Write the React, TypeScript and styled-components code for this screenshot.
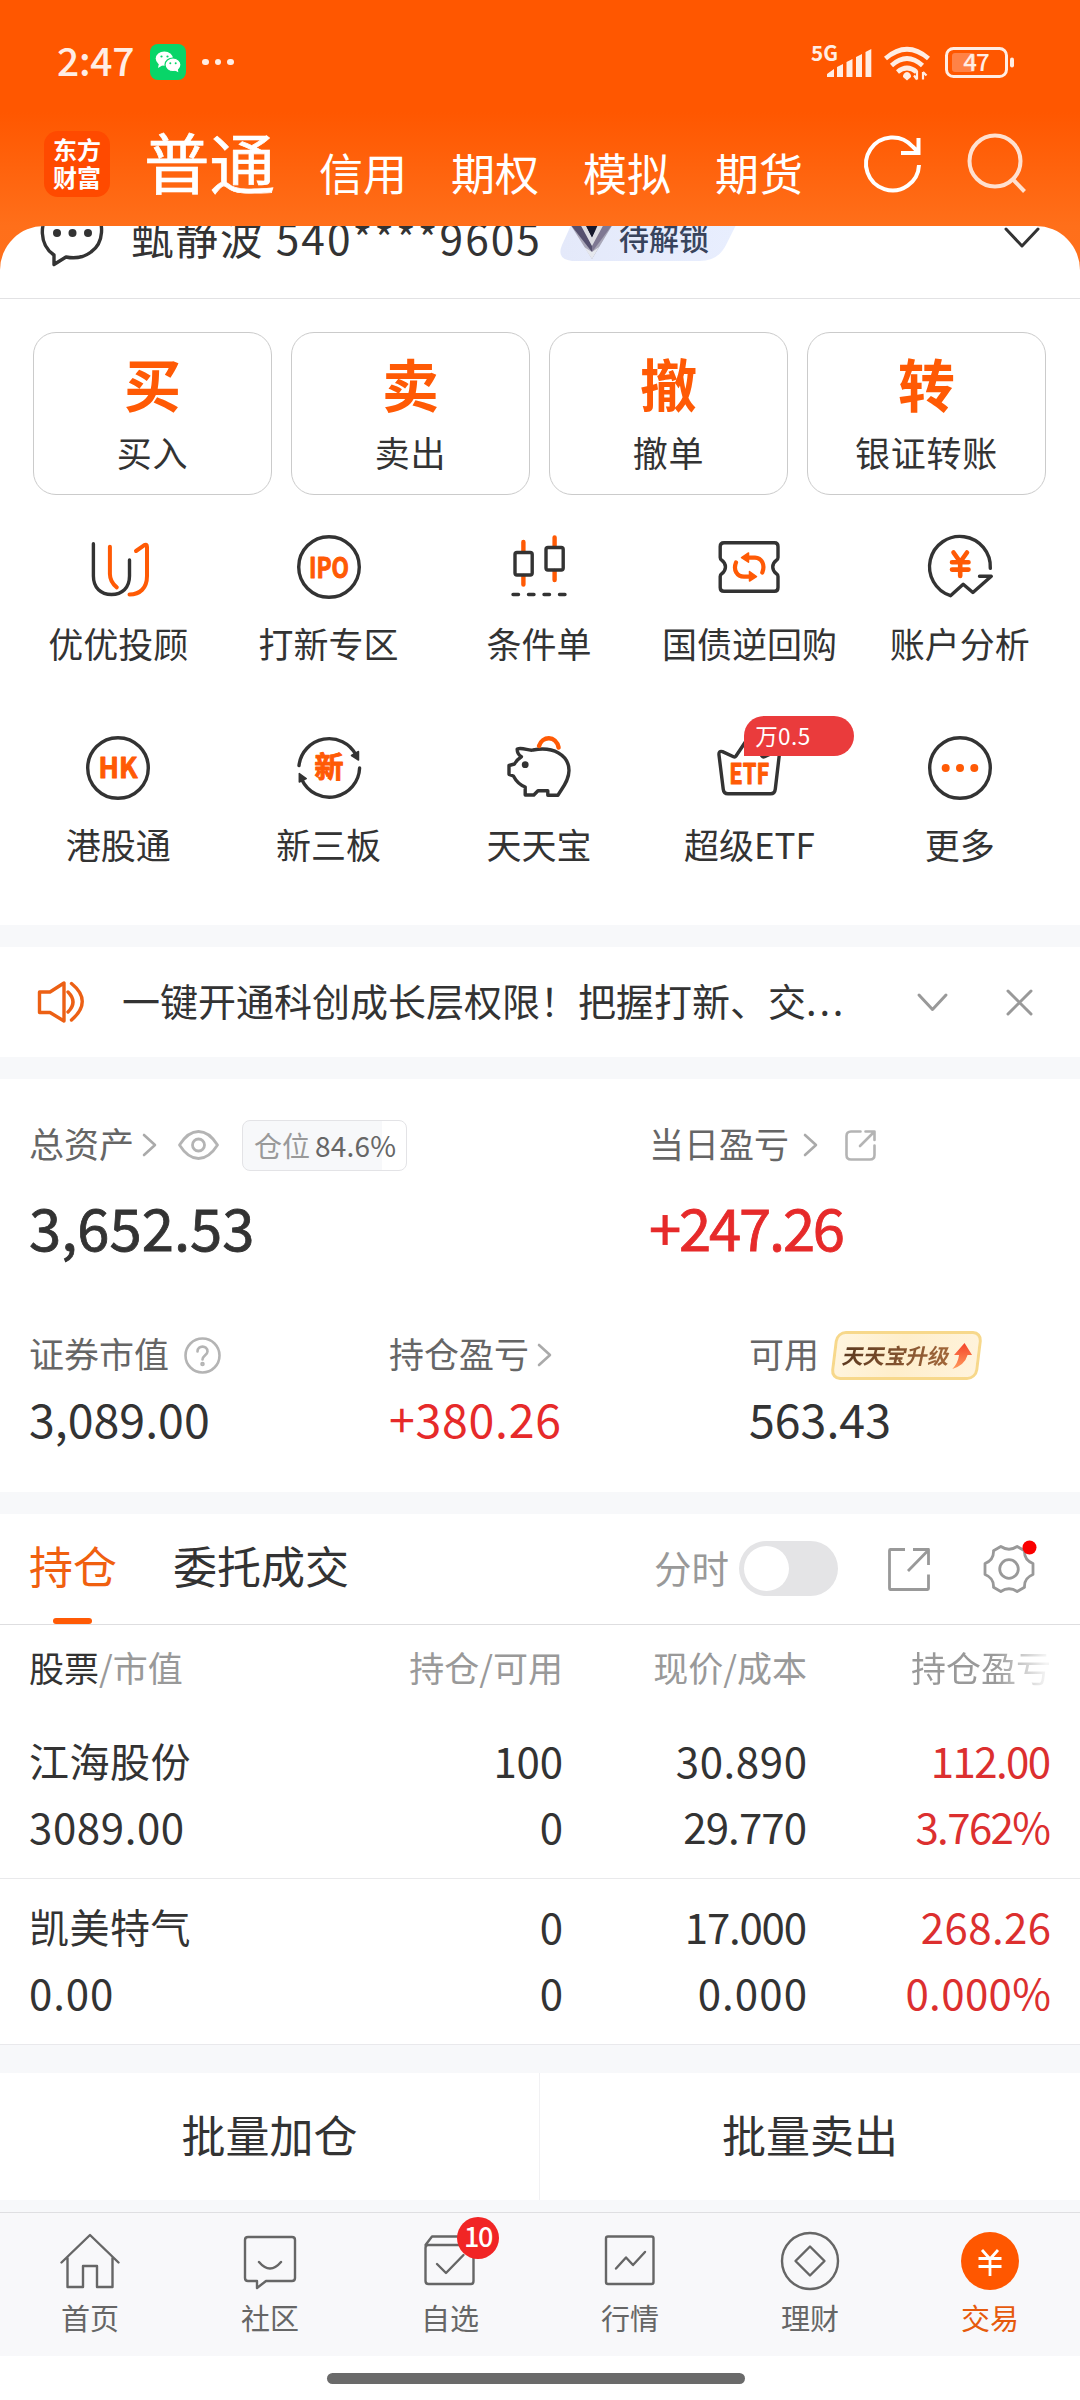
import React from "react";
import styled, { createGlobalStyle, css } from "styled-components";

const ORANGE = "#ff5a05";
const INK = "#333333";
const MUTED = "#666666";
const FAINT = "#999999";
const RED = "#e62a2a";

const GlobalStyle = createGlobalStyle`
  * { box-sizing: border-box; }
  body {
    margin: 0;
    background: #ffffff;
    font-family: "Noto Sans CJK SC", "Noto Sans", sans-serif;
    color: ${INK};
  }
  svg { display: block; flex: none; overflow: visible; }
`;

const Screen = styled.div`
  width: 1080px;
  height: 2400px;
  display: flex;
  flex-direction: column;
  overflow: hidden;
  white-space: nowrap;
`;

/* ---------- header ---------- */

const Hero = styled.header`
  height: 298px;
  flex: none;
  display: flex;
  flex-direction: column;
  background: linear-gradient(180deg, #ff5700 0, #ff5700 112px, #ff6f1a 226px, #ff711d 298px);
`;

const StatusBar = styled.div`
  height: 122px;
  padding: 2px 65px 0 57px;
  display: flex;
  align-items: center;
  justify-content: space-between;
`;

const StatusLeft = styled.div`
  display: flex;
  align-items: center;
`;

const Clock = styled.span`
  width: 93px;
  font-size: 39px;
  font-weight: 500;
  line-height: 44px;
  height: 50px;
  letter-spacing: -0.3px;
  color: #ffede4;
`;

const StatusDots = styled.div`
  display: flex;
  gap: 6px;
  margin-left: 16px;
  i {
    width: 6.5px;
    height: 6.5px;
    border-radius: 50%;
    background: #ffede4;
  }
`;

const TopNav = styled.nav`
  height: 104px;
  padding-left: 44px;
  display: flex;
  align-items: center;
`;

const Logo = styled.div`
  width: 66px;
  height: 66px;
  margin-top: -20px;
  border-radius: 14px;
  background: #ff4a00;
  color: #fff;
  font-size: 24px;
  font-weight: 700;
  line-height: 28px;
  display: flex;
  flex-direction: column;
  align-items: center;
  justify-content: center;
  padding-bottom: 3px;
`;

const Tabs = styled.div`
  display: flex;
  align-items: flex-end;
  margin-left: 34px;
  gap: 44px;
  height: 104px;
`;

const TopTab = styled.span<{ $active?: boolean }>`
  color: #fff;
  ${(p) =>
    p.$active
      ? css`
          font-size: 65.5px;
          line-height: 66px;
          padding-bottom: 32px;
          -webkit-text-stroke: 0.7px #fff;
        `
      : css`
          font-size: 44px;
          line-height: 44px;
          padding-bottom: 32px;
        `}
`;

const TopActions = styled.div`
  display: flex;
  gap: 43px;
  margin: -23px 0 0 61px;
`;

const Sheet = styled.div`
  height: 72px;
  border-radius: 44px 44px 0 0;
  background: #fff;
  overflow: hidden;
`;

const AccountRow = styled.div`
  height: 76px;
  margin-top: -27px;
  padding: 0 41px 0 41px;
  display: flex;
  align-items: center;
`;

const AccountName = styled.span`
  margin-left: 27px;
  width: 429px;
  font-size: 42.5px;
  letter-spacing: 1.95px;
  line-height: 60px;
`;

const VipBadge = styled.div`
  width: 178px;
  height: 48px;
  display: flex;
  align-items: center;
  padding-left: 9px;
  gap: 5px;
  font-size: 30px;
  font-weight: 500;
  line-height: 40px;
  color: #38435c;
  background: linear-gradient(90deg, #e4e9fa, #e8eefe);
  clip-path: path("M26 0H168Q182 0 176 12L166 32Q158 48 140 48H12Q-4 46 2 32L12 10Q16 0 26 0Z");
`;

const Push = styled.div`
  flex: 1;
`;

/* ---------- trading shortcuts ---------- */

const Trade = styled.section`
  height: 627px;
  flex: none;
  border-top: 1px solid #e2e2e4;
  display: flex;
  flex-direction: column;
`;

const TradeCards = styled.div`
  display: grid;
  grid-template-columns: repeat(4, 1fr);
  gap: 19px;
  padding: 33px 34px 0 33px;
`;

const TradeCard = styled.div`
  height: 163px;
  border: 1px solid #cbcbcb;
  border-radius: 23px;
  display: flex;
  flex-direction: column;
  align-items: center;
  padding-top: 20px;
`;

const CardGlyph = styled.span`
  font-size: 57px;
  line-height: 58px;
  font-weight: 700;
  color: ${ORANGE};
`;

const CardLabel = styled.span`
  margin-top: 23px;
  font-size: 35px;
  line-height: 36px;
  letter-spacing: 0.8px;
`;

const ShortcutGrid = styled.div`
  display: grid;
  grid-template-columns: repeat(5, 1fr);
  grid-auto-rows: 201px;
  padding: 36px 15px 0 13px;
`;

const Shortcut = styled.div`
  position: relative;
  display: flex;
  flex-direction: column;
  align-items: center;
`;

const ShortcutLabel = styled.span`
  margin-top: 22px;
  font-size: 35px;
  line-height: 36px;
`;

const PromoTag = styled.span`
  position: absolute;
  left: 100px;
  top: -16px;
  width: 110px;
  height: 40px;
  padding-left: 11px;
  border-radius: 20px 20px 20px 0;
  background: #ea3b3c;
  color: #fff;
  font-size: 22.5px;
  line-height: 38px;
  letter-spacing: 0.4px;
`;

/* ---------- notice ---------- */

const Gap = styled.div<{ $h: number; $line?: boolean }>`
  height: ${(p) => p.$h}px;
  flex: none;
  background: #f7f8fa;
  ${(p) => p.$line && "border-top: 1px solid #e9e9ec;"}
`;

const Notice = styled.section`
  height: 110px;
  flex: none;
  padding: 0 48px 0 37px;
  display: flex;
  align-items: center;
`;

const NoticeText = styled.span`
  margin: -4px 0 0 37px;
  width: 796px;
  font-size: 38px;
  line-height: 44px;
`;

const Ellipsis = styled.span`
  letter-spacing: 2.8px;
`;

/* ---------- assets ---------- */

const Assets = styled.section`
  height: 413px;
  flex: none;
  padding: 39px 0 0 29px;
`;

const AssetMain = styled.div`
  display: grid;
  grid-template-columns: 620px 1fr;
  height: 210px;
`;

const AssetSub = styled.div`
  display: grid;
  grid-template-columns: 360px 360px 1fr;
`;

const LabelLine = styled.div`
  height: 54px;
  display: flex;
  align-items: center;
  font-size: 35px;
  line-height: 54px;
  color: ${MUTED};
  span {
    margin-top: -4px;
  }
`;

const Amount = styled.div<{ $big?: boolean; $up?: boolean; $track?: number }>`
  font-size: ${(p) => (p.$big ? 58 : 46.5)}px;
  line-height: 60px;
  margin-top: ${(p) => (p.$big ? 24 : 6)}px;
  letter-spacing: ${(p) => p.$track ?? 0}px;
  color: ${(p) => (p.$up ? RED : INK)};
  ${(p) => p.$big && "-webkit-text-stroke: 0.8px currentColor;"}
`;

const PositionTag = styled.div`
  width: 165px;
  height: 51px;
  margin-left: 23px;
  border: 1px solid #e3e3e6;
  border-radius: 8px;
  background: linear-gradient(90deg, #f7f8fa 85.5%, #fff 85.5%);
  display: flex;
  align-items: center;
  padding-left: 11px;
  gap: 5px;
  font-size: 28px;
  color: ${FAINT};
  b {
    font-weight: 400;
    color: ${MUTED};
    margin-top: -1px;
    letter-spacing: 0.2px;
  }
`;

const UpgradeTag = styled.div`
  width: 147px;
  height: 49px;
  margin-left: 14px;
  border: 3px solid #f7d88b;
  border-radius: 10px;
  background: linear-gradient(100deg, #fff5df, #feeecb 45%, #fff3dc);
  transform: skewX(-7deg);
  display: flex;
  align-items: center;
  padding-left: 7px;
  gap: 3px;
`;

const UpgradeText = styled.b`
  font-size: 21.4px;
  line-height: 40px;
  font-weight: 700;
  margin-top: -2px;
  transform: skewX(-5deg);
  color: transparent;
  background: linear-gradient(90deg, #5d3a20, #a2673a);
  background-clip: text;
`;

/* ---------- holdings ---------- */

const HoldTabs = styled.div`
  height: 111px;
  flex: none;
  border-bottom: 1px solid #dedee0;
  padding: 0 45px 0 29px;
  display: flex;
  align-items: stretch;
`;

const HoldTab = styled.div<{ $active?: boolean }>`
  font-size: 44px;
  line-height: 102px;
  margin-right: 56px;
  color: ${(p) => (p.$active ? "#f0600f" : INK)};
  display: flex;
  flex-direction: column;
  align-items: center;
  &::after {
    content: "";
    width: 39px;
    height: 6px;
    margin: 2px 2px 0 0;
    border-radius: 3px;
    background: ${(p) => (p.$active ? ORANGE : "transparent")};
  }
`;

const HoldTools = styled.div`
  display: flex;
  align-items: center;
  height: 109px;
`;

const ToolText = styled.span`
  font-size: 37.5px;
  line-height: 44px;
  margin: -4px 10px 0 0;
  color: ${FAINT};
`;

const Switch = styled.div`
  width: 99px;
  height: 55px;
  padding: 5px;
  border-radius: 28px;
  background: #e4e4e6;
  margin-right: 47px;
  &::before {
    content: "";
    display: block;
    width: 45px;
    height: 45px;
    border-radius: 50%;
    background: #fff;
  }
`;

const GridRow = styled.div`
  display: grid;
  grid-template-columns: 334px 200px 244px 244px;
  padding-left: 29px;
  flex: none;
`;

const HeadRow = styled(GridRow)`
  height: 88px;
  font-size: 35px;
  line-height: 83px;
  color: ${FAINT};
  b {
    font-weight: 400;
    color: ${INK};
  }
`;

const HoldRow = styled(GridRow)<{ $line?: boolean }>`
  height: ${(p) => (p.$line ? 166 : 165)}px;
  padding-top: 14px;
  ${(p) => p.$line && "border-bottom: 1px solid #e9e9eb;"}
`;

const Cell = styled.div<{ $right?: boolean }>`
  text-align: ${(p) => (p.$right ? "right" : "left")};
`;

const FadingCell = styled(Cell)`
  color: transparent;
  background: linear-gradient(90deg, ${FAINT} 77%, #f4f4f4 98%);
  background-clip: text;
`;

const StockName = styled.div`
  font-size: 40px;
  letter-spacing: 0.5px;
  line-height: 66px;
  height: 66px;
`;

const Num = styled.div<{ $up?: boolean; $track?: number }>`
  font-size: 42px;
  letter-spacing: ${(p) => p.$track ?? 0.4}px;
  margin-right: ${(p) => -(p.$track ?? 0.4)}px;
  line-height: 66px;
  height: 66px;
  color: ${(p) => (p.$up ? "#dc2f2f" : INK)};
`;

const Batch = styled.div`
  height: 127px;
  flex: none;
  display: grid;
  grid-template-columns: 539px 1fr;
  div {
    text-align: center;
    font-size: 44px;
    line-height: 122px;
  }
  div + div {
    border-left: 1px solid #f1f1f3;
  }
`;

/* ---------- bottom bar ---------- */

const BottomNav = styled.nav`
  height: 144px;
  flex: none;
  background: #f8f8fa;
  border-top: 1px solid #dfdfe2;
  display: grid;
  grid-template-columns: repeat(6, 1fr);
`;

const NavItem = styled.div<{ $active?: boolean }>`
  position: relative;
  display: flex;
  flex-direction: column;
  align-items: center;
  padding-top: 18px;
  font-size: 29px;
  line-height: 34px;
  color: ${(p) => (p.$active ? "#e65a0c" : MUTED)};
  span {
    margin-top: 9px;
  }
`;

const CountBadge = styled.b`
  position: absolute;
  left: 97px;
  top: 4px;
  width: 42px;
  height: 42px;
  border-radius: 50%;
  background: #f12525;
  color: #fff;
  font-size: 27px;
  font-weight: 500;
  line-height: 38px;
  letter-spacing: -1.5px;
  text-align: center;
`;

const HomeArea = styled.div`
  height: 44px;
  flex: none;
  padding: 17px 0 0 327px;
  &::before {
    content: "";
    display: block;
    width: 418px;
    height: 11px;
    border-radius: 6px;
    background: #6a6a6a;
  }
`;

/* ---------- icons ---------- */

const Stroked = styled.svg<{ $c?: string; $w?: number }>`
  fill: none;
  stroke: ${(p) => p.$c ?? INK};
  stroke-width: ${(p) => p.$w ?? 3.4};
  stroke-linecap: round;
  stroke-linejoin: round;
  text {
    stroke: ${ORANGE};
    stroke-width: 1;
    fill: ${ORANGE};
    font-weight: 700;
    text-anchor: middle;
  }
`;

const Q = ({ children }: { children: React.ReactNode }) => (
  <Stroked width="72" height="72" viewBox="0 0 72 72">{children}</Stroked>
);

const Advisor = () => (
  <Q>
    <path d="M11.4 12.7V45C11.4 57 19 63.5 29.5 63.5S47.5 57 47.5 45V29" />
    <path d="M27.9 15.7V43Q28 51 34.8 56.3M54 20L62 14.3Q65 12.5 65 16V45C65 57 58 63.5 47.5 63.5" stroke={ORANGE} strokeWidth="4" />
  </Q>
);
const Ipo = () => (
  <Q>
    <circle cx="36" cy="36" r="30.3" />
    <text x="36" y="46.5" fontSize="28" textLength="40" lengthAdjust="spacingAndGlyphs">IPO</text>
  </Q>
);
const Candles = () => (
  <Q>
    <path d="M20.4 11V20M20.4 45V53.5M51.6 6.5V15M51.6 40V49" stroke={ORANGE} strokeWidth="4.4" />
    <rect x="12" y="21.5" width="17.2" height="22.5" rx="2" />
    <rect x="43" y="16.5" width="17.2" height="22.5" rx="2" />
    <path d="M10 63.5H15.5M25.5 63.5H31M41 63.5H46.5M56.5 63.5H62" />
  </Q>
);
const Repo = () => (
  <Q>
    <path d="M11 11.7H61.5Q65 11.7 65 15.5V26.5Q65 28.3 63.5 29.2C58.5 33 58.5 39 63.5 42.8Q65 43.7 65 45.5V56.5Q65 60.3 61.5 60.3H11Q7.2 60.3 7.2 56.5V45.5Q7.2 43.7 8.7 42.8C13.7 39 13.7 33 8.7 29.2Q7.2 28.3 7.2 26.5V15.5Q7.2 11.7 11 11.7Z" />
    <path d="M33 26.6H42C49 27 52.3 34 49.3 41.5M23 31.5C20 39 24 45.5 31 45.6H38" stroke={ORANGE} strokeWidth="4.2" />
    <path d="M28.5 26.6L35.5 22V31.2ZM43.5 45.5L36.5 40.5V50Z" fill={ORANGE} stroke={ORANGE} strokeWidth="1.5" />
  </Q>
);
const Analysis = () => (
  <Q>
    <path d="M66.3 37.3A30.4 30.4 0 1 0 26.5 64.7L39.2 53.3L48.9 61.5L67.3 45.3H55.5" />
    <path d="M29.5 21.5L36.2 31L43 21.5M28 31.2H44.5M28 38.6H44.5M36.2 31V45" stroke={ORANGE} strokeWidth="4.6" />
  </Q>
);
const HongKong = () => (
  <Q>
    <circle cx="36" cy="36" r="30.3" />
    <text x="36" y="46.4" fontSize="28" textLength="39" lengthAdjust="spacingAndGlyphs">HK</text>
  </Q>
);
const NewBoard = () => (
  <Q>
    <path d="M6 33.5A30.3 30.3 0 0 1 63 23M66.6 36A30.3 30.3 0 0 1 9 48" />
    <path d="M65.5 19.5V28L58.5 23.5ZM6.3 50V41.5L13.2 46.5Z" fill={INK} strokeWidth="1.5" />
    <text x="36" y="46" fontSize="29">新</text>
  </Q>
);
const Piggy = () => (
  <Q>
    <path d="M14.2 17C20 15 26 19.4 30 18C50 14 66 23 66 38.5C66 49 59 56 55 63.2H44.8V58.7H35L30.8 63H22.2V55C17 53 13 49 10.4 44L6 42.3V33.5L11.5 32Q14 27.5 18.4 24.7Q14 22 14.2 17Z" />
    <circle cx="22.2" cy="32.7" r="3.4" fill={INK} stroke="none" />
    <path d="M36 14C39 4 53 3 55.6 15.5" stroke={ORANGE} strokeWidth="4.4" />
  </Q>
);
const Etf = () => (
  <Q>
    <path d="M9.5 19.6L20.5 24.8Q22 25.5 23 24L34 7.5Q36 5 38 7.5L49 24Q50 25.5 51.5 24.8L62.5 19.6Q66.7 18.5 66.3 23L62.3 57Q61.8 61.8 57.5 61.8H15Q10.7 61.8 10.2 57L6 23Q5.5 18.500 9.5 19.6Z" />
    <text x="36.3" y="52" fontSize="28" textLength="40" lengthAdjust="spacingAndGlyphs">ETF</text>
  </Q>
);
const More = () => (
  <Q>
    <circle cx="36" cy="36" r="30.3" />
    <g fill={ORANGE} stroke="none">
      <circle cx="21.7" cy="36" r="4" />
      <circle cx="36" cy="36" r="4" />
      <circle cx="50.3" cy="36" r="4" />
    </g>
  </Q>
);

const WeChat = () => (
  <svg width="36" height="36" viewBox="0 0 36 36">
    <rect width="36" height="36" rx="8" fill="#08d568" />
    <ellipse cx="14.3" cy="14.6" rx="8.6" ry="7.2" fill="#fff" />
    <path d="M9 19L8 24L13 21Z" fill="#fff" />
    <ellipse cx="23" cy="20.8" rx="8" ry="6.8" fill="#fff" stroke="#08d568" strokeWidth="1.2" />
    <path d="M24 26L28.3 28.3L27.8 24.5Z" fill="#fff" />
    <g fill="#08d568">
      <circle cx="11.5" cy="12.5" r="1.1" />
      <circle cx="17.5" cy="12.5" r="1.1" />
      <circle cx="20.3" cy="19.2" r="1" />
      <circle cx="25.7" cy="19.2" r="1" />
    </g>
  </svg>
);

const Signals = () => (
  <svg width="204" height="40" viewBox="0 0 204 40" fill="#ffede4">
    <text x="0" y="18.5" fontSize="21" fontWeight="700" textLength="27" lengthAdjust="spacingAndGlyphs">5G</text>
    <path d="M16 35V32L23 27V35ZM26 35V25L32 22V35ZM35.500 35V20L41.500 17V35ZM45 35V15L51 12V35ZM54.500 35V10L60.300 7V35Z" />
    <g fill="none" stroke="#ffede4" strokeWidth="4.600">
      <path d="M74.500 16.500Q96 -2 117.500 16.500" />
      <path d="M80.500 23.500Q96 9.500 111.500 23.500" />
      <path d="M86.500 30Q96 22 105.500 30" />
    </g>
    <path d="M96 30A4.500 4.500 0 0 1 100 35L96 38.500L92 35A4.500 4.500 0 0 1 96 30Z" />
    <path d="M106 29V37.500M106 37.500L103 33.500M112 37.500V30M112 30L115.500 33.500" stroke="#ffede4" strokeWidth="2.200" />
    <rect x="135.500" y="6.500" width="60" height="28" rx="7" fill="none" stroke="#ffede4" strokeWidth="3" />
    <rect x="141" y="11" width="23" height="19" rx="3" fill="#ff8246" />
    <text x="165" y="29" fontSize="24" fontWeight="500" textAnchor="middle" letterSpacing="-1">47</text>
    <rect x="199" y="15.500" width="4" height="10" rx="2" />
  </svg>
);

const ChevronDown = ({ w, c, s = 3 }: { w: number; c: string; s?: number }) => (
  <Stroked width={w} height={w / 2} viewBox={`0 0 ${w} ${w / 2}`} $c={c} $w={s}>
    <path d={`M1 0L${w / 2} ${w / 2}L${w - 1} 0`} />
  </Stroked>
);

const ChevronRight = styled(({ className }: { className?: string; $gap: number }) => (
  <Stroked className={className} width="13" height="22" viewBox="0 0 13 22" $c="#aaaaaa" $w={2.6}>
    <path d="M1 1L12 11L1 21" />
  </Stroked>
))`
  margin-left: ${(p) => p.$gap}px;
`;

const LineIcon = styled(Stroked)<{ $gap: number }>`
  margin-left: ${(p) => p.$gap}px;
`;

const UpArrow = () => (
  <svg width="19" height="26" viewBox="0 0 19 26">
    <defs>
      <linearGradient id="up" x1="0" y1="0" x2="0" y2="1">
        <stop offset="0" stopColor="#f4432a" />
        <stop offset="1" stopColor="#ff9a5c" />
      </linearGradient>
    </defs>
    <path d="M10 0L19 12H14.500Q13 22 1 26Q6 20 6 12H1Z" fill="url(#up)" />
  </svg>
);

/* ---------- data ---------- */

const cards = [["买", "买入"], ["卖", "卖出"], ["撤", "撤单"], ["转", "银证转账"]];

const shortcuts: { icon: React.ReactNode; label: string; tag?: string }[] = [
  { icon: <Advisor />, label: "优优投顾" },
  { icon: <Ipo />, label: "打新专区" },
  { icon: <Candles />, label: "条件单" },
  { icon: <Repo />, label: "国债逆回购" },
  { icon: <Analysis />, label: "账户分析" },
  { icon: <HongKong />, label: "港股通" },
  { icon: <NewBoard />, label: "新三板" },
  { icon: <Piggy />, label: "天天宝" },
  { icon: <Etf />, label: "超级ETF", tag: "万0.5" },
  { icon: <More />, label: "更多" },
];

type Figure = { text: string; track?: number };

const holdings: { name: string; value: Figure; qty: Figure[]; price: Figure[]; pnl: Figure[] }[] = [
  {
    name: "江海股份",
    value: { text: "3089.00", track: 0.6 },
    qty: [{ text: "100", track: -0.2 }, { text: "0" }],
    price: [{ text: "30.890", track: 0.6 }, { text: "29.770", track: -0.9 }],
    pnl: [{ text: "112.00", track: -1.6 }, { text: "3.762%", track: -1.6 }],
  },
  {
    name: "凯美特气",
    value: { text: "0.00", track: 0.9 },
    qty: [{ text: "0" }, { text: "0" }],
    price: [{ text: "17.000", track: -1.2 }, { text: "0.000", track: 1.1 }],
    pnl: [{ text: "268.26" }, { text: "0.000%" }],
  },
];

const N = ({ children }: { children: React.ReactNode }) => (
  <Stroked width="60" height="60" viewBox="0 0 60 60" $c="#666666" $w={2.4}>{children}</Stroked>
);

const navs: { label: string; icon: React.ReactNode; count?: number; active?: boolean }[] = [
  { label: "首页", icon: <N><path d="M1.500 31.500L30 4L58.500 31.500M7.500 27V56H23V35H37V56H52.500V27" /></N> },
  { label: "社区", icon: <N><path d="M8 6H52Q55 6 55 9V47Q55 50 52 50H26L17 57V50H8Q5 50 5 47V9Q5 6 8 6ZM19 31Q30 44 41 31" /></N> },
  { label: "自选", icon: <N><path d="M5.500 14L12 5.500H47L53.500 14M8 14H51Q53.500 14 53.500 17V50Q53.500 53 51 53H8.500Q5.500 53 5.500 50V17Q5.500 14 8 14ZM17 33L26 42L43.500 24" /></N>, count: 10 },
  { label: "行情", icon: <N><rect x="6" y="5.500" width="47.500" height="47.500" rx="2" /><path d="M16 37.500L26 26.500L33 34L45 21" /></N> },
  { label: "理财", icon: <N><circle cx="30" cy="30" r="28" /><path d="M30 15.500L44.500 30L30 44.500L15.500 30Z" /></N> },
  {
    label: "交易",
    active: true,
    icon: (
      <N>
        <circle cx="30" cy="30" r="29" fill="#ff5700" stroke="none" />
        <path d="M22 19L30 28L38 19M18.500 27.500H41.500M18.500 35.500H41.500M30 28V45" stroke="#fff" strokeLinecap="butt" strokeWidth="2.800" />
      </N>
    ),
  },
];

const Figures = ({ items, up }: { items: Figure[]; up?: boolean }) => (
  <Cell $right>
    {items.map((f, i) => (
      <Num key={i} $up={up} $track={f.track}>{f.text}</Num>
    ))}
  </Cell>
);

export default function App() {
  return (
    <Screen>
      <GlobalStyle />
      <Hero>
        <StatusBar>
          <StatusLeft>
            <Clock>2:47</Clock>
            <WeChat />
            <StatusDots><i /><i /><i /></StatusDots>
          </StatusLeft>
          <Signals />
        </StatusBar>
        <TopNav>
          <Logo><span>东方</span><span>财富</span></Logo>
          <Tabs>
            <TopTab $active>普通</TopTab>
            <TopTab>信用</TopTab>
            <TopTab>期权</TopTab>
            <TopTab>模拟</TopTab>
            <TopTab>期货</TopTab>
          </Tabs>
          <TopActions>
            <Stroked width="60" height="60" viewBox="0 0 60 60" $c="#fff" $w={4}>
              <path d="M55 32A26.500 26.500 0 1 1 48.500 13.500L54 19M54.500 5V20H37" strokeLinecap="butt" strokeLinejoin="miter" />
            </Stroked>
            <Stroked width="60" height="60" viewBox="0 0 60 60" $c="#ffe0cf" $w={4}>
              <circle cx="28" cy="28" r="25.500" />
              <path d="M45.500 46L57.500 58.500" strokeLinecap="butt" />
            </Stroked>
          </TopActions>
        </TopNav>
        <Sheet>
          <AccountRow>
            <Stroked width="63" height="70" viewBox="0 0 63 70" $w={3.4}>
              <path d="M13 53C-2 43 -2 20 10 10C23 -1 42 -1 53 10C64 20 63 41 50 50Q39 58 25 55L13 62.500Z" />
              <g fill={INK} stroke="none">
                <circle cx="16" cy="31" r="4" />
                <circle cx="31.500" cy="31" r="4" />
                <circle cx="47" cy="31" r="4" />
              </g>
            </Stroked>
            <AccountName>甄静波 540****9605</AccountName>
            <VipBadge>
              <svg width="45" height="46" viewBox="0 0 45 46">
                <path d="M1 10L12 4L23 27L34 4L44 10L23 45Z" fill="#a9a7b8" />
                <path d="M1 10L12 6L23 29L23 38Z" fill="#55506e" />
                <path d="M44 10L34 6L23 29L23 38Z" fill="#7f7893" />
                <path d="M12 4H34L23 24Z" fill="#16182c" />
                <path d="M10 8L23 32L36 8L31 6L23 24L14 6Z" fill="#dcdce2" />
                <path d="M15 33L23 38L30 33L23 45Z" fill="#e6e8ee" />
              </svg>
              待解锁
            </VipBadge>
            <Push />
            <ChevronDown w={34} c={INK} />
          </AccountRow>
        </Sheet>
      </Hero>

      <Trade>
        <TradeCards>
          {cards.map(([glyph, label]) => (
            <TradeCard key={label}>
              <CardGlyph>{glyph}</CardGlyph>
              <CardLabel>{label}</CardLabel>
            </TradeCard>
          ))}
        </TradeCards>
        <ShortcutGrid>
          {shortcuts.map((s) => (
            <Shortcut key={s.label}>
              {s.icon}
              {s.tag && <PromoTag>{s.tag}</PromoTag>}
              <ShortcutLabel>{s.label}</ShortcutLabel>
            </Shortcut>
          ))}
        </ShortcutGrid>
      </Trade>

      <Gap $h={22} />
      <Notice>
        <Stroked width="48" height="42" viewBox="0 0 48 42" $c="#ec6014" $w={3.4}>
          <path d="M2.500 11H13L27 2V40L13 31.500H2.500Z" />
          <path d="M31 11Q41 21 31 31M34.500 2.500Q56 20 34.500 39" />
        </Stroked>
        <NoticeText>一键开通科创成长层权限！把握打新、交<Ellipsis>...</Ellipsis></NoticeText>
        <ChevronDown w={29} c={FAINT} />
        <Push />
        <Stroked width="25" height="25" viewBox="0 0 25 25" $c={FAINT} $w={3}>
          <path d="M1 1L24 24M24 1L1 24" />
        </Stroked>
      </Notice>
      <Gap $h={22} />

      <Assets>
        <AssetMain>
          <div>
            <LabelLine>
              <span>总资产</span>
              <ChevronRight $gap={9} />
              <LineIcon $gap={22} width="41" height="30" viewBox="0 0 41 30" $c="#b4b4b4" $w={2.8}>
                <path d="M1.500 15Q10 1.500 20.500 1.500T39.500 15Q31 28.500 20.500 28.500T1.500 15Z" />
                <circle cx="20.500" cy="15" r="6" />
              </LineIcon>
              <PositionTag>仓位<b>84.6%</b></PositionTag>
            </LabelLine>
            <Amount $big>3,652.53</Amount>
          </div>
          <div>
            <LabelLine>
              <span>当日盈亏</span>
              <ChevronRight $gap={15} />
              <LineIcon $gap={28} width="31" height="31" viewBox="0 0 31 31" $c="#b4b4b4" $w={2.6}>
                <path d="M15.500 1.500H6Q1.500 1.500 1.500 6V25Q1.500 29.500 6 29.500H25Q29.500 29.500 29.500 25V15.500M15 16L29 2M20.500 1.500H29.500V10" />
              </LineIcon>
            </LabelLine>
            <Amount $big $up $track={-2.2}>+247.26</Amount>
          </div>
        </AssetMain>
        <AssetSub>
          <div>
            <LabelLine>
              <span>证券市值</span>
              <LineIcon $gap={15} width="37" height="37" viewBox="0 0 37 37" $c="#b4b4b4" $w={2.6}>
                <circle cx="18.500" cy="18.500" r="17" />
                <path d="M13.500 14.500C13.500 8 23.500 8 23.500 14.500C23.500 18 18.500 18.500 18.500 22.500" />
                <circle cx="18.500" cy="27" r="1" />
              </LineIcon>
            </LabelLine>
            <Amount>3,089.00</Amount>
          </div>
          <div>
            <LabelLine>
              <span>持仓盈亏</span>
              <ChevronRight $gap={9} />
            </LabelLine>
            <Amount $up $track={0.7}>+380.26</Amount>
          </div>
          <div>
            <LabelLine>
              <span>可用</span>
              <UpgradeTag>
                <UpgradeText>天天宝升级</UpgradeText>
                <UpArrow />
              </UpgradeTag>
            </LabelLine>
            <Amount>563.43</Amount>
          </div>
        </AssetSub>
      </Assets>
      <Gap $h={22} />

      <HoldTabs>
        <HoldTab $active>持仓</HoldTab>
        <HoldTab>委托成交</HoldTab>
        <Push />
        <HoldTools>
          <ToolText>分时</ToolText>
          <Switch />
          <Stroked width="48" height="48" viewBox="0 0 48 48" $c={FAINT} $w={2.8}>
            <path d="M20 4.500H5.500Q4.500 4.500 4.500 5.500V43Q4.500 44.500 5.500 44.500H42.500Q43.500 44.500 43.500 43.500V29.500M23 26L43.500 5M28 4.500H43.500V20" strokeLinecap="butt" />
          </Stroked>
          <LineIcon $gap={50} width="52" height="50" viewBox="0 0 52 50" $c={FAINT} $w={2.8}>
            <path d="M10.500 6.800L17.800 2.500Q26 8 34.200 2.500L41.500 6.800Q41 16 50 19.500V30.500Q41 34 41.500 43.200L34.200 47.500Q26 42 17.800 47.500L10.500 43.200Q11 34 2 30.500V19.500Q11 16 10.500 6.800Z" />
            <circle cx="26" cy="25" r="9.300" />
            <circle cx="46.500" cy="3.500" r="7" fill="#fa0000" stroke="none" />
          </LineIcon>
        </HoldTools>
      </HoldTabs>
      <HeadRow>
        <Cell><b>股票</b>/市值</Cell>
        <Cell $right>持仓/可用</Cell>
        <Cell $right>现价/成本</Cell>
        <FadingCell $right>持仓盈亏</FadingCell>
      </HeadRow>
      {holdings.map((h, i) => (
        <HoldRow key={h.name} $line={i === 0}>
          <Cell>
            <StockName>{h.name}</StockName>
            <Num $track={h.value.track}>{h.value.text}</Num>
          </Cell>
          <Figures items={h.qty} />
          <Figures items={h.price} />
          <Figures items={h.pnl} up />
        </HoldRow>
      ))}
      <Gap $h={29} $line />
      <Batch>
        <div>批量加仓</div>
        <div>批量卖出</div>
      </Batch>
      <Gap $h={12} />

      <BottomNav>
        {navs.map((n) => (
          <NavItem key={n.label} $active={n.active}>
            {n.icon}
            {n.count && <CountBadge>{n.count}</CountBadge>}
            <span>{n.label}</span>
          </NavItem>
        ))}
      </BottomNav>
      <HomeArea />
    </Screen>
  );
}
